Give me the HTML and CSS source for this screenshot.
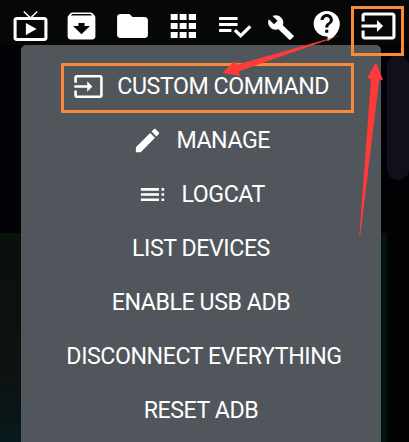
FILE: index.html
```
<!DOCTYPE html>
<html lang="en">
<head>
<meta charset="utf-8">
<title>ADB menu</title>
<link rel="stylesheet" href="styles.css">
</head>
<body>
<div class="app">
  <header class="toolbar">
    <svg class="icon" viewBox="0 0 24 24" preserveAspectRatio="none"><path d="M21 6h-7.6l3.3-3.3L16 2l-4 4-4-4-.7.7L10.600 6H3c-1.100 0-2 .9-2 2v12c0 1.100.9 2 2 2h18c1.100 0 2-.9 2-2V8c0-1.100-.9-2-2-2zm0 14H3V8h18v12zM9 10v8l7-4z"/></svg>
    <svg class="icon" viewBox="0 0 24 24" preserveAspectRatio="none"><path d="M20.540 5.230l-1.390-1.680C18.880 3.210 18.470 3 18 3H6c-.47 0-.88.210-1.160.550L3.460 5.230C3.170 5.570 3 6.020 3 6.500V19c0 1.100.9 2 2 2h14c1.100 0 2-.9 2-2V6.500c0-.48-.17-.93-.46-1.270zM12 17.500L6.500 12H10v-2h4v2h3.500L12 17.500zM5.120 5l.81-1h12l.94 1H5.120z"/></svg>
    <svg class="icon" viewBox="0 0 24 24" preserveAspectRatio="none"><path d="M10 4H4c-1.100 0-1.990.9-1.990 2L2 18c0 1.100.9 2 2 2h16c1.100 0 2-.9 2-2V8c0-1.100-.9-2-2-2h-8l-2-2z"/></svg>
    <svg class="icon" viewBox="0 0 24 24" preserveAspectRatio="none"><path d="M3.700 4h4.500v4H3.700zM9.500 4h4.500v4H9.500zM15.400 4h4.700v4h-4.700zM3.700 10h4.500v4H3.700zM9.500 10h4.500v4H9.500zM15.400 10h4.700v4h-4.700zM3.700 16h4.500v4H3.700zM9.500 16h4.500v4H9.500zM15.400 16h4.700v4h-4.700z"/></svg>
    <svg class="icon" viewBox="0 0 24 24" preserveAspectRatio="none"><path d="M14 10H2v2h12v-2zm0-4H2v2h12V6zM2 16h8v-2H2v2zm19.500-4.500L23 13l-6.990 7-4.510-4.500L13 14l3.010 3 5.490-5.500z"/></svg>
    <svg class="icon icon-wrench" viewBox="0 0 24 24" preserveAspectRatio="none"><path d="M22.700 19l-9.100-9.100c.9-2.300.4-5-1.500-6.900-2-2-5-2.400-7.400-1.300L9 6 6 9 1.600 4.700C.4 7.100.9 10.100 2.900 12.100c1.900 1.900 4.600 2.400 6.900 1.500l9.100 9.100c.4.4 1 .4 1.400 0l2.300-2.300c.5-.4.5-1.100.1-1.400z"/></svg>
    <svg class="icon" viewBox="0 0 24 24" preserveAspectRatio="none"><path d="M11.500 2C6.810 2 3 5.810 3 10.500S6.810 19 11.500 19h.5v3c4.860-2.340 8-7 8-11.500C20 5.810 16.190 2 11.500 2zm1 14.500h-2v-2h2v2zm0-3.500h-2c0-3.250 3-3 3-5 0-1.100-.9-2-2-2s-2 .9-2 2h-2c0-2.210 1.790-4 4-4s4 1.790 4 4c0 2.500-3 2.750-3 5z"/></svg>
    <svg class="icon" viewBox="0 0 24 24" preserveAspectRatio="none"><path d="M21 3.010H3c-1.100 0-2 .9-2 2V9h2V4.990h18v14.030H3V15H1v4.010c0 1.100.9 1.980 2 1.980h18c1.100 0 2-.88 2-1.980v-14c0-1.110-.9-2-2-2zM11 16l4-4-4-4v3H1v2h10v3z"/></svg>
  </header>
  <main class="content">
    <div class="side-left"></div>
    <nav class="menu">
      <div class="item"><svg class="item-icon" viewBox="0 0 24 24"><path d="M21 3.010H3c-1.100 0-2 .9-2 2V9h2V4.990h18v14.030H3V15H1v4.010c0 1.100.9 1.980 2 1.980h18c1.100 0 2-.88 2-1.980v-14c0-1.110-.9-2-2-2zM11 16l4-4-4-4v3H1v2h10v3z"/></svg><span>CUSTOM COMMAND</span></div>
      <div class="item"><svg class="item-icon" viewBox="0 0 24 24"><path d="M3 17.250V21h3.750L17.810 9.940l-3.750-3.750L3 17.250zM20.710 7.040c.39-.39.39-1.020 0-1.410l-2.340-2.340c-.39-.39-1.020-.39-1.410 0l-1.830 1.830 3.750 3.750 1.830-1.830z"/></svg><span>MANAGE</span></div>
      <div class="item"><svg class="item-icon" viewBox="0 0 24 24"><path d="M3 9h14V7H3v2zm0 4h14v-2H3v2zm0 4h14v-2H3v2zm16 0h2v-2h-2v2zm0-10v2h2V7h-2zm0 6h2v-2h-2v2z"/></svg><span>LOGCAT</span></div>
      <div class="item"><span>LIST DEVICES</span></div>
      <div class="item"><span>ENABLE USB ADB</span></div>
      <div class="item item-wide"><span>DISCONNECT EVERYTHING</span></div>
      <div class="item"><span>RESET ADB</span></div>
    </nav>
    <div class="side-right"><div class="pill"></div></div>
  </main>
  <div class="mark mark-button"></div>
  <div class="mark mark-item"></div>
  <svg class="arrows" viewBox="0 0 409 442">
    <path d="M341 35.300L237.500 64.500 234.700 61 222.300 72.800 240 76 238.500 71.500z"/>
    <path d="M359.300 235.700L371 79.500 367 78 376 62.300 383 80 379.200 79.500 360.300 235.700z"/>
  </svg>
</div>
</body>
</html>
```
FILE: styles.css
```
* { box-sizing: border-box; }

body {
  margin: 0;
  background: #020205;
  font-family: Roboto, sans-serif;
}

.app {
  position: relative;
  width: 409px;
  height: 442px;
  overflow: hidden;
  display: flex;
  flex-direction: column;
}

.toolbar {
  height: 45px;
  padding: 8px 0 0 11.5px;
  display: flex;
  gap: 14px;
  background: #050807;
}

.icon {
  width: 37px;
  height: 36px;
  flex: none;
  fill: #fff;
}

.icon-wrench {
  width: 28px;
  height: 27px;
  margin-top: 6px;
}

.content {
  flex: 1;
  display: grid;
  grid-template-columns: 21px 360px 28px;
}

.side-left {
  background: linear-gradient(#020106 0 188px, #0a100b 188px, #0d1213 340px, #07191c 397px);
}

.menu {
  padding-top: 14px;
  background: #50565c;
  border-radius: 5px 5px 0 0;
}

.item {
  height: 54px;
  display: flex;
  align-items: center;
  justify-content: center;
  gap: 13.5px;
  color: #fff;
  font-size: 23.2px;
  letter-spacing: -0.44px;
  line-height: 28px;
  white-space: nowrap;
}

.item-wide {
  padding-left: 6px;
}

.item-icon {
  width: 31px;
  height: 31px;
  margin-top: 1px;
  flex: none;
  fill: #fff;
}

.side-right {
  padding: 10px 0 0 6px;
  background: linear-gradient(#03130f, #03130f) 0 188px / 6px 209px no-repeat, #020205;
}

.pill {
  height: 125px;
  border-radius: 12px;
  background: #10101a;
}

.mark {
  position: absolute;
  border: 3px solid #fb8a38;
}

.mark-button {
  left: 351px;
  top: 6px;
  width: 53px;
  height: 50px;
}

.mark-item {
  left: 61px;
  top: 63px;
  width: 293px;
  height: 50px;
}

.arrows {
  position: absolute;
  left: 0;
  top: 0;
  width: 409px;
  height: 442px;
  fill: #ff3a38;
}
```
